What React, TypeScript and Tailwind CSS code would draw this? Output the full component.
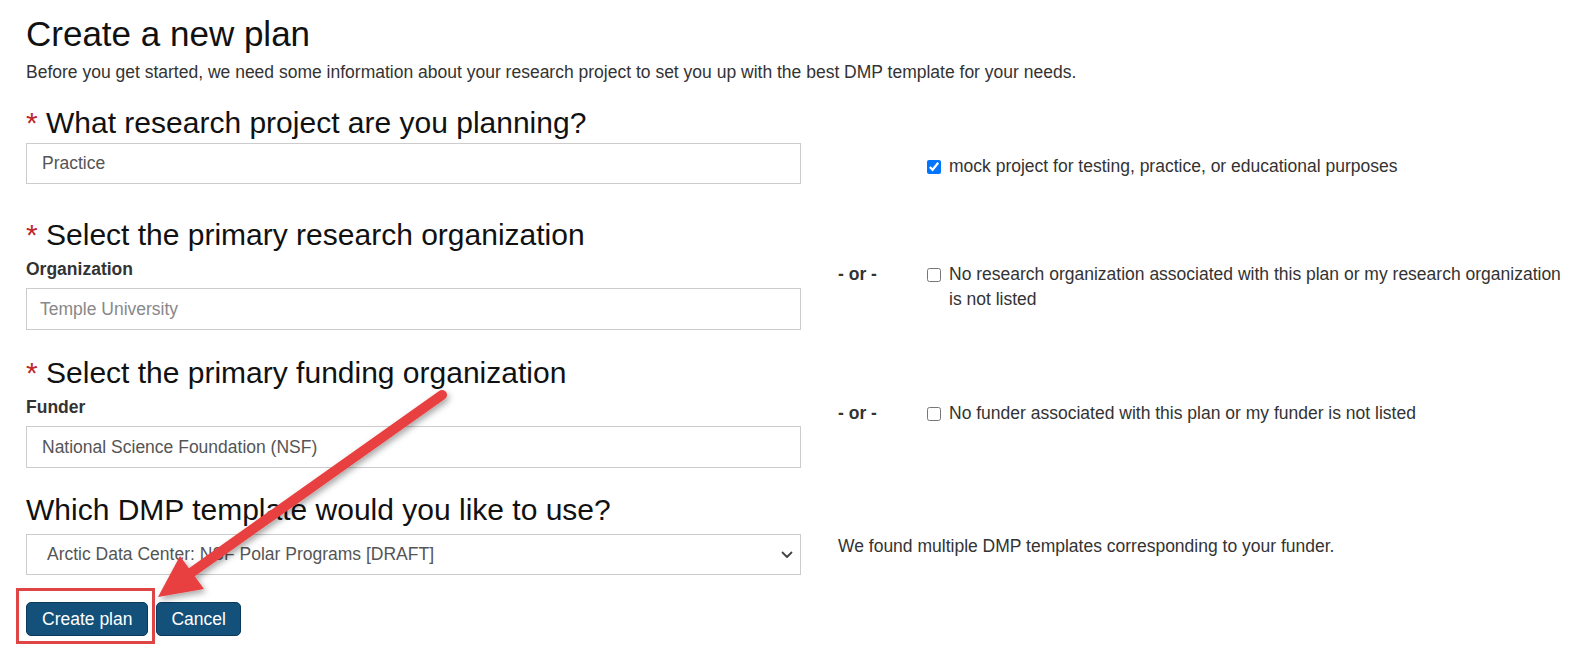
import React from "react";

const Star = () => <span className="text-[#c0272d]">* </span>;

function Chevron() {
  return (
    <svg width="12" height="8" viewBox="0 0 12 8" className="block">
      <path d="M1.5 1.5 L6 6 L10.5 1.5" fill="none" stroke="#444" strokeWidth="1.8" strokeLinecap="round" strokeLinejoin="round" />
    </svg>
  );
}

function Check({ checked, children }: { checked?: boolean; children: React.ReactNode }) {
  return (
    <div className="flex items-start">
      <input
        type="checkbox"
        defaultChecked={checked}
        className="mt-[6px] mr-[8px] h-[14px] w-[14px] shrink-0 accent-[#0075ff]"
      />
      <span className="text-[17.5px] leading-[25px] text-[#333]">{children}</span>
    </div>
  );
}

export default function App() {
  return (
    <div className="relative h-[647px] w-[1591px] overflow-hidden bg-white font-['Liberation_Sans',Arial,sans-serif] text-[#333]">
      <div className="pl-[26px] pt-[15px]">
        <h1 className="text-[35px] leading-[38px] text-[#111]">Create a new plan</h1>
        <p className="mt-[7px] text-[17.5px] leading-[24px] text-[#333]">
          Before you get started, we need some information about your research project to set you up with the best DMP template for your needs.
        </p>

        {/* Row 1 */}
        <div className="mt-[22px] flex">
          <div className="w-[775px]">
            <h2 className="text-[30px] leading-[33px] text-[#111]">
              <Star />What research project are you planning?
            </h2>
            <div className="mt-[4px] flex h-[41px] items-center border border-[#cccccc] pl-[15px] text-[17.5px] text-[#555]">
              Practice
            </div>
          </div>
          <div className="pl-[126px] pt-[48px]">
            <Check checked>mock project for testing, practice, or educational purposes</Check>
          </div>
        </div>

        {/* Row 2 */}
        <div className="mt-[34px] flex">
          <div className="w-[775px] shrink-0">
            <h2 className="text-[30px] leading-[33px] text-[#111]">
              <Star />Select the primary research organization
            </h2>
            <div className="mt-[6px] text-[17.5px] font-bold leading-[24px] text-[#333]">Organization</div>
            <div className="mt-[7px] flex h-[42px] items-center border border-[#cccccc] pl-[13px] text-[17.5px] text-[#888]">
              Temple University
            </div>
          </div>
          <div className="flex pl-[37px] pr-[21px] pt-[44px]">
            <div className="w-[89px] shrink-0 text-[17.5px] font-bold leading-[25px] text-[#333]">- or -</div>
            <Check>No research organization associated with this plan or my research organization is not listed</Check>
          </div>
        </div>

        {/* Row 3 */}
        <div className="mt-[26px] flex">
          <div className="w-[775px] shrink-0">
            <h2 className="text-[30px] leading-[33px] text-[#111]">
              <Star />Select the primary funding organization
            </h2>
            <div className="mt-[6px] text-[17.5px] font-bold leading-[24px] text-[#333]">Funder</div>
            <div className="mt-[7px] flex h-[42px] items-center border border-[#cccccc] pl-[15px] text-[17.5px] text-[#555]">
              National Science Foundation (NSF)
            </div>
          </div>
          <div className="flex pl-[37px] pr-[21px] pt-[45px]">
            <div className="w-[89px] shrink-0 text-[17.5px] font-bold leading-[25px] text-[#333]">- or -</div>
            <Check>No funder associated with this plan or my funder is not listed</Check>
          </div>
        </div>

        {/* Row 4 */}
        <div className="mt-[25px] flex">
          <div className="w-[775px] shrink-0">
            <h2 className="text-[30px] leading-[33px] text-[#111]">Which DMP template would you like to use?</h2>
            <div className="mt-[8px] flex h-[41px] items-center justify-between border border-[#cccccc] pl-[20px] pr-[7px] text-[17.5px] text-[#555]">
              <span>Arctic Data Center: NSF Polar Programs [DRAFT]</span>
              <Chevron />
            </div>
          </div>
          <div className="pl-[37px] pt-[41px] text-[17.5px] leading-[24px] text-[#333]">
            We found multiple DMP templates corresponding to your funder.
          </div>
        </div>

        {/* Buttons */}
        <div className="mt-[27px] flex gap-[8px]">
          <button className="h-[34px] rounded-[5px] border border-[#0b3b5c] bg-[#13507a] px-[15px] text-[17.5px] text-white">
            Create plan
          </button>
          <button className="h-[34px] rounded-[5px] border border-[#0b3b5c] bg-[#13507a] px-[14px] text-[17.5px] text-white">
            Cancel
          </button>
        </div>
      </div>

      {/* Red highlight box */}
      <div className="pointer-events-none absolute left-[16px] top-[588px] h-[56px] w-[139px] border-[3px] border-[#e04545]" />

      {/* Red arrow */}
      <svg
        className="pointer-events-none absolute left-0 top-0"
        width="1591"
        height="647"
        viewBox="0 0 1591 647"
      >
        <defs>
          <filter id="sh" x="-20%" y="-20%" width="140%" height="140%">
            <feDropShadow dx="2" dy="3" stdDeviation="3" floodColor="#000" floodOpacity="0.35" />
          </filter>
        </defs>
        <g filter="url(#sh)">
          <line x1="442" y1="395" x2="188" y2="575" stroke="#e8413f" strokeWidth="10" strokeLinecap="round" />
          <polygon points="158,597 180,556 204,589" fill="#e8413f" />
        </g>
      </svg>
    </div>
  );
}
